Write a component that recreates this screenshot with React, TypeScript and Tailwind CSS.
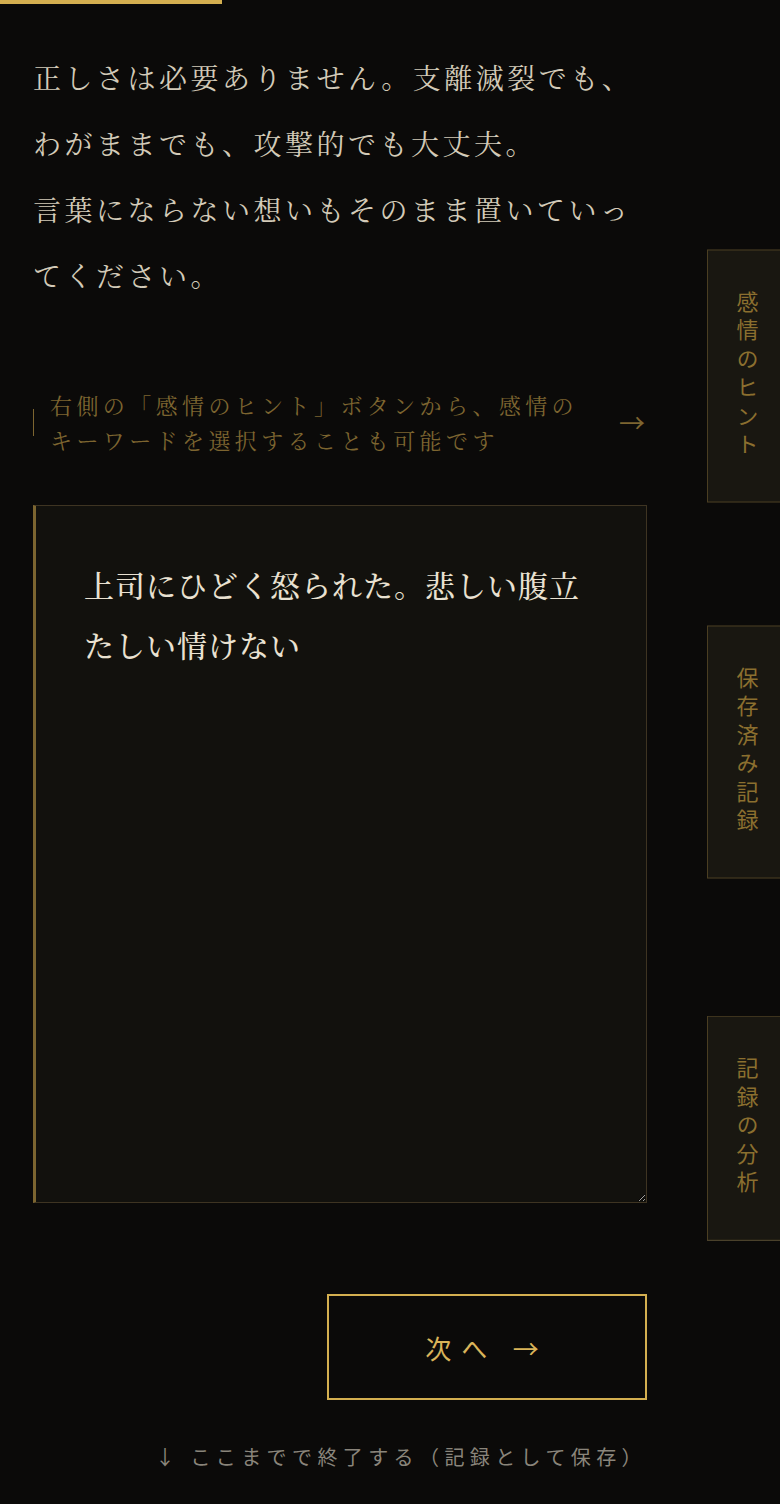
import { useState } from "react";

const serif = "font-['Noto_Serif_CJK_JP','Noto_Sans_CJK_JP',serif]";
const sans = "font-['Noto_Sans_CJK_JP','Noto_Sans',sans-serif]";

const SideTab = ({ label, pos }: { label: string; pos: string }) => (
  <button
    className={`fixed right-[-8px] ${pos} -translate-y-1/2 w-[81px] border border-[#4a3e22] bg-[#191711] py-10 flex justify-center ${sans}`}
  >
    <span className="[writing-mode:vertical-rl] text-[22px] leading-none tracking-[6.5px] text-[#8b6f2f]">
      {label}
    </span>
  </button>
);

const App = () => {
  const [text, setText] = useState("上司にひどく怒られた。悲しい腹立たしい情けない");

  return (
    <div className="min-h-screen bg-[#0b0a09] relative overflow-hidden">
      {/* progress bar */}
      <div className="h-1 w-[222px] bg-[#d4af50]" />

      <main className="pl-[33px] w-[647px]">
        {/* intro */}
        <p className={`mt-10 text-[28px] leading-[66px] tracking-[0.125em] text-[#d3cab8] ${serif}`}>
          正しさは必要ありません。支離滅裂でも、
          <br />
          わがままでも、攻撃的でも大丈夫。
          <br />
          言葉にならない想いもそのまま置いていっ
          <br />
          てください。
        </p>

        {/* hint */}
        <div className="mt-[79px] flex items-center">
          <span className="w-px h-[27px] bg-[#7d6530]" />
          <p className={`ml-4 flex-1 text-[22px] leading-[35px] tracking-[0.2em] text-[#7d6530] ${serif}`}>
            右側の「感情のヒント」ボタンから、感情の
            <br />
            キーワードを選択することも可能です
          </p>
          <span className={`text-[26px] leading-none text-[#7d6530] mr-[2px] ${sans}`}>→</span>
        </div>

        {/* textarea */}
        <textarea
          value={text}
          onChange={(e) => setText(e.target.value)}
          className={`mt-12 block w-full h-[698px] bg-[#12110d] border border-[#3e3422] border-l-[3px] border-l-[#7c6530] pl-12 pr-12 pt-12 text-[30px] font-medium leading-[60px] tracking-[1px] text-[#e9e1d1] outline-none ${serif}`}
        />

        {/* next */}
        <div className="mt-[91px] flex justify-end">
          <button
            className={`w-[320px] h-[106px] border-2 border-[#d4af50] text-[26px] tracking-[0.38em] text-[#d9b45a] flex items-center justify-center ${sans}`}
          >
            次へ →
          </button>
        </div>

        <p className={`mt-[42px] text-right text-[20px] leading-[30px] tracking-[0.27em] text-[#8a857b] ${sans}`}>
          ↓ ここまでで終了する（記録として保存）
        </p>
      </main>

      <SideTab label="感情のヒント" pos="top-1/4" />
      <SideTab label="保存済み記録" pos="top-1/2" />
      <SideTab label="記録の分析" pos="top-3/4" />
    </div>
  );
};

export default App;
